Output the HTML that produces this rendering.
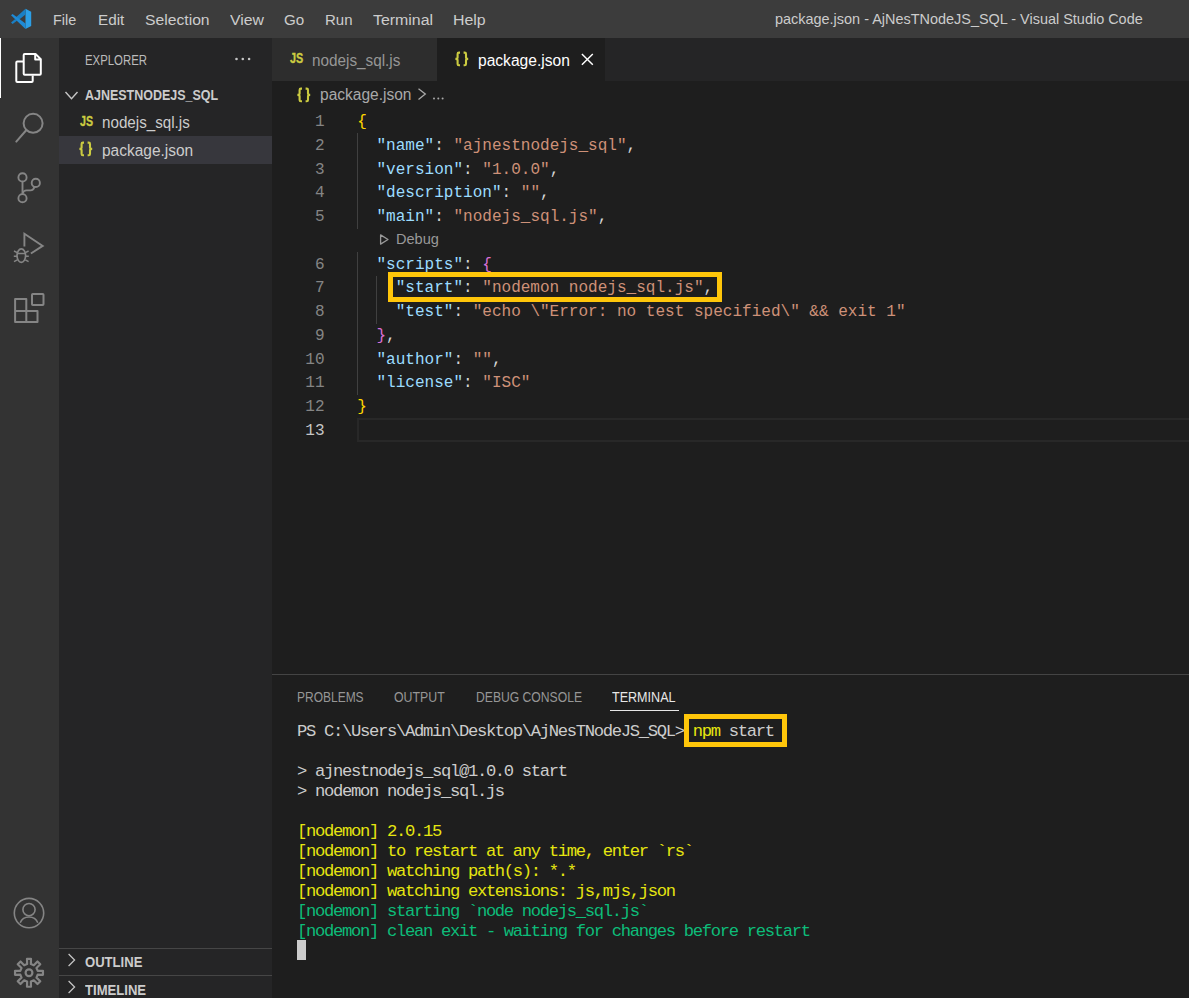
<!DOCTYPE html>
<html><head><meta charset="utf-8"><style>
html,body{margin:0;padding:0;}
body{width:1189px;height:998px;overflow:hidden;position:relative;background:#1e1e1e;font-family:'Liberation Sans', sans-serif;}
.t{position:absolute;white-space:pre;}
.r{position:absolute;}
</style></head><body>
<div class="r" style="left:0px;top:0px;width:1189px;height:38px;background:#3c3c3c;"></div>
<div class="r" style="left:0px;top:38px;width:59px;height:960px;background:#333333;"></div>
<div class="r" style="left:59px;top:38px;width:213px;height:960px;background:#252526;"></div>
<div class="r" style="left:272px;top:38px;width:917px;height:43px;background:#252526;"></div>
<div class="r" style="left:272px;top:81px;width:917px;height:917px;background:#1e1e1e;"></div>
<svg class="r" style="left:0;top:0" width="40" height="38" viewBox="0 0 40 38">
<polygon points="25.5,8.8 31.2,11.7 31.2,26.1 25.5,29" fill="#2c9fe6"/>
<polygon points="25.5,8.8 25.5,14.6 18.3,20.2 15.4,17.8" fill="#1a7fc4"/>
<polygon points="11,15.3 12.6,14 25.5,23.4 25.5,29" fill="#1e8ad6"/>
<polygon points="11,22.6 12.6,23.9 17.3,20.4 15.2,18.9" fill="#1a7fc4"/>
</svg>
<div class="t" style="left:53.10px;top:10.15px;font-size:15.5px;line-height:20.15px;color:#cccccc;font-family:'Liberation Sans', sans-serif;font-weight:normal;transform:scaleX(0.9291);transform-origin:0 0;">File</div>
<div class="t" style="left:97.50px;top:10.15px;font-size:15.5px;line-height:20.15px;color:#cccccc;font-family:'Liberation Sans', sans-serif;font-weight:normal;transform:scaleX(0.9848);transform-origin:0 0;">Edit</div>
<div class="t" style="left:144.60px;top:10.15px;font-size:15.5px;line-height:20.15px;color:#cccccc;font-family:'Liberation Sans', sans-serif;font-weight:normal;transform:scaleX(1.0131);transform-origin:0 0;">Selection</div>
<div class="t" style="left:229.70px;top:10.15px;font-size:15.5px;line-height:20.15px;color:#cccccc;font-family:'Liberation Sans', sans-serif;font-weight:normal;transform:scaleX(1.0193);transform-origin:0 0;">View</div>
<div class="t" style="left:283.70px;top:10.15px;font-size:15.5px;line-height:20.15px;color:#cccccc;font-family:'Liberation Sans', sans-serif;font-weight:normal;transform:scaleX(0.9769);transform-origin:0 0;">Go</div>
<div class="t" style="left:324.90px;top:10.15px;font-size:15.5px;line-height:20.15px;color:#cccccc;font-family:'Liberation Sans', sans-serif;font-weight:normal;transform:scaleX(0.9674);transform-origin:0 0;">Run</div>
<div class="t" style="left:373.00px;top:10.15px;font-size:15.5px;line-height:20.15px;color:#cccccc;font-family:'Liberation Sans', sans-serif;font-weight:normal;transform:scaleX(1.0260);transform-origin:0 0;">Terminal</div>
<div class="t" style="left:453.30px;top:10.15px;font-size:15.5px;line-height:20.15px;color:#cccccc;font-family:'Liberation Sans', sans-serif;font-weight:normal;transform:scaleX(1.0256);transform-origin:0 0;">Help</div>
<div class="t" style="left:775.30px;top:8.75px;font-size:15.0px;line-height:19.5px;color:#cccccc;font-family:'Liberation Sans', sans-serif;font-weight:normal;transform:scaleX(0.9629);transform-origin:0 0;">package.json - AjNesTNodeJS_SQL - Visual Studio Code</div>
<div class="r" style="left:0px;top:38px;width:1.4px;height:60px;background:#ffffff;"></div>
<svg class="r" style="left:0;top:38px" width="60" height="300" viewBox="0 38 60 300" fill="none" stroke-width="2">
<path d="M35.2 53.9 H24.7 Q23.7 53.9 23.7 54.9 V73.8 Q23.7 74.8 24.7 74.8 H39.8 Q40.8 74.8 40.8 73.8 V59.2 L35.5 53.9 Z M35.2 54.2 V59.6 H40.6" stroke="#ffffff" stroke-linejoin="round"/>
<path d="M23.2 61.4 H17.3 Q16.3 61.4 16.3 62.4 V81 Q16.3 82 17.3 82 H31.7 Q32.7 82 32.7 81 V75.5" stroke="#ffffff" stroke-linejoin="round"/>
<circle cx="33.1" cy="123.3" r="9.5" stroke="#858585"/>
<path d="M26.4 130 L16.3 141.6" stroke="#858585" stroke-linecap="round"/>
<circle cx="22.5" cy="177.4" r="4.1" stroke="#858585" stroke-width="1.9"/>
<circle cx="22.5" cy="198.2" r="4.1" stroke="#858585" stroke-width="1.9"/>
<circle cx="35.8" cy="182.9" r="4.1" stroke="#858585" stroke-width="1.9"/>
<path d="M22.5 181.5 V194.1" stroke="#858585" stroke-width="1.9"/>
<path d="M34.4 186.8 Q33.5 190.4 30.5 190.4 H26.5 Q23.5 190.4 22.6 193.5" stroke="#858585" stroke-width="1.9"/>
<path d="M24.4 246.5 V233.8 L42.7 245.9 L30.9 253.5" stroke="#858585" stroke-width="1.9" stroke-linejoin="miter"/>
<ellipse cx="21.3" cy="255.6" rx="4.3" ry="6.7" stroke="#858585" stroke-width="1.7"/>
<path d="M17.2 253.6 H25.4 M14 251 L17.3 252.6 M28.6 251 L25.3 252.6 M13.8 256.2 H17 M25.6 256.2 H28.8 M14 261.6 L17.3 259.8 M28.6 261.6 L25.3 259.8" stroke="#858585" stroke-width="1.5"/>
<path d="M15.1 299 H26.3 V322 H15.1 Z M15.1 311 H37.5 V322 H26.3" stroke="#858585" stroke-linejoin="round"/>
<rect x="32" y="294" width="11.5" height="11" rx="0.8" stroke="#858585"/>
</svg>
<svg class="r" style="left:0;top:880px" width="60" height="118" viewBox="0 880 60 118" fill="none">
<circle cx="29" cy="913.1" r="14.7" stroke="#858585" stroke-width="1.6"/>
<circle cx="29" cy="909.6" r="6.1" stroke="#858585" stroke-width="1.6"/>
<path d="M20.2 922.8 Q22.5 917 29 917 Q35.5 917 37.8 922.8" stroke="#858585" stroke-width="1.6"/>
<path d="M27.13 964.10 L27.01 958.84 L30.99 958.84 L30.87 964.10 L33.83 965.32 L37.47 961.52 L40.28 964.33 L36.48 967.97 L37.70 970.93 L42.96 970.81 L42.96 974.79 L37.70 974.67 L36.48 977.63 L40.28 981.27 L37.47 984.08 L33.83 980.28 L30.87 981.50 L30.99 986.76 L27.01 986.76 L27.13 981.50 L24.17 980.28 L20.53 984.08 L17.72 981.27 L21.52 977.63 L20.30 974.67 L15.04 974.79 L15.04 970.81 L20.30 970.93 L21.52 967.97 L17.72 964.33 L20.53 961.52 L24.17 965.32 Z" stroke-linejoin="round" stroke-width="2.2" stroke="#858585"/>
<circle cx="29" cy="972.8" r="3.4" stroke="#858585" stroke-width="2.2"/>
</svg>
<div class="t" style="left:84.60px;top:51.25px;font-size:14px;line-height:18.2px;color:#bbbbbb;font-family:'Liberation Sans', sans-serif;font-weight:normal;transform:scaleX(0.8132);transform-origin:0 0;">EXPLORER</div>
<svg class="r" style="left:230px;top:52px" width="26" height="14"><circle cx="6.5" cy="7" r="1.3" fill="#c5c5c5"/><circle cx="12.8" cy="7" r="1.3" fill="#c5c5c5"/><circle cx="19.1" cy="7" r="1.3" fill="#c5c5c5"/></svg>
<svg class="r" style="left:60px;top:82px" width="30" height="26" fill="none"><path d="M5.5 10 L11.5 16.8 L17.5 10" stroke="#c5c5c5" stroke-width="1.4"/></svg>
<div class="t" style="left:84.60px;top:85.85px;font-size:14.5px;line-height:18.85px;color:#cccccc;font-family:'Liberation Sans', sans-serif;font-weight:bold;transform:scaleX(0.8609);transform-origin:0 0;">AJNESTNODEJS_SQL</div>
<div class="r" style="left:59px;top:136px;width:213px;height:27.5px;background:#37373d;"></div>
<div class="t" style="left:79.80px;top:112.45px;font-size:14.6px;line-height:18.98px;color:#cbcb41;font-family:'Liberation Sans', sans-serif;font-weight:bold;-webkit-text-stroke:0.35px #cbcb41;transform:scaleX(0.7281);transform-origin:0 0;">JS</div>
<div class="t" style="left:102.20px;top:113.26px;font-size:16px;line-height:20.8px;color:#cccccc;font-family:'Liberation Sans', sans-serif;font-weight:normal;transform:scaleX(0.9492);transform-origin:0 0;">nodejs_sql.js</div>
<svg class="r" style="left:74.00px;top:137.70px" width="24" height="24" fill="none" stroke="#cbcb41" stroke-width="2.1"><path d="M10 4.6 H8.9 Q7.6 4.6 7.6 5.9 V9.5 Q7.6 10.9 5.4 10.9 Q7.6 10.9 7.6 12.3 V15.9 Q7.6 17.2 8.9 17.2 H10 M13.6 4.6 H14.7 Q16 4.6 16 5.9 V9.5 Q16 10.9 18.2 10.9 Q16 10.9 16 12.3 V15.9 Q16 17.2 14.7 17.2 H13.6"/></svg>
<div class="t" style="left:102.20px;top:140.66px;font-size:16px;line-height:20.8px;color:#cccccc;font-family:'Liberation Sans', sans-serif;font-weight:normal;transform:scaleX(0.9672);transform-origin:0 0;">package.json</div>
<div class="r" style="left:59px;top:948px;width:213px;height:1px;background:#464646;"></div>
<div class="r" style="left:59px;top:975px;width:213px;height:1px;background:#464646;"></div>
<svg class="r" style="left:60px;top:950px" width="30" height="46" fill="none"><path d="M8.6 4 L14.6 10 L8.6 16 M8.6 31 L14.6 37 L8.6 43" stroke="#c5c5c5" stroke-width="1.25"/></svg>
<div class="t" style="left:84.60px;top:953.25px;font-size:14px;line-height:18.2px;color:#cccccc;font-family:'Liberation Sans', sans-serif;font-weight:bold;transform:scaleX(0.9342);transform-origin:0 0;">OUTLINE</div>
<div class="t" style="left:84.60px;top:981.05px;font-size:14px;line-height:18.2px;color:#cccccc;font-family:'Liberation Sans', sans-serif;font-weight:bold;transform:scaleX(0.9351);transform-origin:0 0;">TIMELINE</div>
<div class="r" style="left:272px;top:38px;width:164.5px;height:43px;background:#2d2d2d;"></div>
<div class="r" style="left:436.5px;top:38px;width:168.5px;height:43px;background:#1e1e1e;"></div>
<div class="t" style="left:289.60px;top:49.45px;font-size:14.6px;line-height:18.98px;color:#cbcb41;font-family:'Liberation Sans', sans-serif;font-weight:bold;-webkit-text-stroke:0.35px #cbcb41;transform:scaleX(0.7393);transform-origin:0 0;">JS</div>
<div class="t" style="left:312.10px;top:50.66px;font-size:16px;line-height:20.8px;color:#969696;font-family:'Liberation Sans', sans-serif;font-weight:normal;transform:scaleX(0.9557);transform-origin:0 0;">nodejs_sql.js</div>
<svg class="r" style="left:450.00px;top:48.00px" width="24" height="24" fill="none" stroke="#cbcb41" stroke-width="2.1"><path d="M10 4.6 H8.9 Q7.6 4.6 7.6 5.9 V9.5 Q7.6 10.9 5.4 10.9 Q7.6 10.9 7.6 12.3 V15.9 Q7.6 17.2 8.9 17.2 H10 M13.6 4.6 H14.7 Q16 4.6 16 5.9 V9.5 Q16 10.9 18.2 10.9 Q16 10.9 16 12.3 V15.9 Q16 17.2 14.7 17.2 H13.6"/></svg>
<div class="t" style="left:477.70px;top:50.66px;font-size:16px;line-height:20.8px;color:#ffffff;font-family:'Liberation Sans', sans-serif;font-weight:normal;transform:scaleX(0.9736);transform-origin:0 0;">package.json</div>
<svg class="r" style="left:578px;top:50px" width="20" height="20" fill="none"><path d="M3.9 3.9 L14.8 14.8 M14.8 3.9 L3.9 14.8" stroke="#ffffff" stroke-width="1.45"/></svg>
<svg class="r" style="left:291.70px;top:83.70px" width="24" height="24" fill="none" stroke="#cbcb41" stroke-width="2.1"><path d="M10 4.6 H8.9 Q7.6 4.6 7.6 5.9 V9.5 Q7.6 10.9 5.4 10.9 Q7.6 10.9 7.6 12.3 V15.9 Q7.6 17.2 8.9 17.2 H10 M13.6 4.6 H14.7 Q16 4.6 16 5.9 V9.5 Q16 10.9 18.2 10.9 Q16 10.9 16 12.3 V15.9 Q16 17.2 14.7 17.2 H13.6"/></svg>
<div class="t" style="left:319.60px;top:85.16px;font-size:16px;line-height:20.8px;color:#a9a9a9;font-family:'Liberation Sans', sans-serif;font-weight:normal;transform:scaleX(0.9704);transform-origin:0 0;">package.json</div>
<svg class="r" style="left:414px;top:84px" width="34" height="20" fill="none"><path d="M4.5 4.7 L11.3 10.1 L4.5 15.5" stroke="#a9a9a9" stroke-width="1.3"/><circle cx="20" cy="14.6" r="1" fill="#a9a9a9"/><circle cx="24.3" cy="14.6" r="1" fill="#a9a9a9"/><circle cx="28.6" cy="14.6" r="1" fill="#a9a9a9"/></svg>
<div class="r" style="left:357px;top:418px;width:832px;height:24px;background:transparent;box-sizing:border-box;border:2px solid #282828;border-right:none;"></div>
<div class="r" style="left:357px;top:133px;width:1px;height:95.5px;background:#404040;"></div>
<div class="r" style="left:357px;top:252px;width:1px;height:142.5px;background:#404040;"></div>
<div class="r" style="left:376px;top:276px;width:1px;height:47.5px;background:#404040;"></div>
<div class="t" style="left:314.98px;top:112.10px;font-size:16.04px;line-height:20.85px;color:#858585;font-family:'Liberation Mono', monospace;font-weight:normal;">1</div>
<div class="t" style="left:357.20px;top:112.10px;font-size:16.04px;line-height:20.85px;color:#d4d4d4;font-family:'Liberation Mono', monospace;font-weight:normal;white-space:pre;"><span style="color:#ffd700">{</span></div>
<div class="t" style="left:314.98px;top:135.85px;font-size:16.04px;line-height:20.85px;color:#858585;font-family:'Liberation Mono', monospace;font-weight:normal;">2</div>
<div class="t" style="left:357.20px;top:135.85px;font-size:16.04px;line-height:20.85px;color:#d4d4d4;font-family:'Liberation Mono', monospace;font-weight:normal;white-space:pre;"><span style="color:#d4d4d4">  </span><span style="color:#9cdcfe">"name"</span><span style="color:#d4d4d4">: </span><span style="color:#ce9178">"ajnestnodejs_sql"</span><span style="color:#d4d4d4">,</span></div>
<div class="t" style="left:314.98px;top:159.60px;font-size:16.04px;line-height:20.85px;color:#858585;font-family:'Liberation Mono', monospace;font-weight:normal;">3</div>
<div class="t" style="left:357.20px;top:159.60px;font-size:16.04px;line-height:20.85px;color:#d4d4d4;font-family:'Liberation Mono', monospace;font-weight:normal;white-space:pre;"><span style="color:#d4d4d4">  </span><span style="color:#9cdcfe">"version"</span><span style="color:#d4d4d4">: </span><span style="color:#ce9178">"1.0.0"</span><span style="color:#d4d4d4">,</span></div>
<div class="t" style="left:314.98px;top:183.35px;font-size:16.04px;line-height:20.85px;color:#858585;font-family:'Liberation Mono', monospace;font-weight:normal;">4</div>
<div class="t" style="left:357.20px;top:183.35px;font-size:16.04px;line-height:20.85px;color:#d4d4d4;font-family:'Liberation Mono', monospace;font-weight:normal;white-space:pre;"><span style="color:#d4d4d4">  </span><span style="color:#9cdcfe">"description"</span><span style="color:#d4d4d4">: </span><span style="color:#ce9178">""</span><span style="color:#d4d4d4">,</span></div>
<div class="t" style="left:314.98px;top:207.10px;font-size:16.04px;line-height:20.85px;color:#858585;font-family:'Liberation Mono', monospace;font-weight:normal;">5</div>
<div class="t" style="left:357.20px;top:207.10px;font-size:16.04px;line-height:20.85px;color:#d4d4d4;font-family:'Liberation Mono', monospace;font-weight:normal;white-space:pre;"><span style="color:#d4d4d4">  </span><span style="color:#9cdcfe">"main"</span><span style="color:#d4d4d4">: </span><span style="color:#ce9178">"nodejs_sql.js"</span><span style="color:#d4d4d4">,</span></div>
<div class="t" style="left:314.98px;top:254.55px;font-size:16.04px;line-height:20.85px;color:#858585;font-family:'Liberation Mono', monospace;font-weight:normal;">6</div>
<div class="t" style="left:357.20px;top:254.55px;font-size:16.04px;line-height:20.85px;color:#d4d4d4;font-family:'Liberation Mono', monospace;font-weight:normal;white-space:pre;"><span style="color:#d4d4d4">  </span><span style="color:#9cdcfe">"scripts"</span><span style="color:#d4d4d4">: </span><span style="color:#da70d6">{</span></div>
<div class="t" style="left:314.98px;top:278.30px;font-size:16.04px;line-height:20.85px;color:#858585;font-family:'Liberation Mono', monospace;font-weight:normal;">7</div>
<div class="t" style="left:357.20px;top:278.30px;font-size:16.04px;line-height:20.85px;color:#d4d4d4;font-family:'Liberation Mono', monospace;font-weight:normal;white-space:pre;"><span style="color:#d4d4d4">    </span><span style="color:#9cdcfe">"start"</span><span style="color:#d4d4d4">: </span><span style="color:#ce9178">"nodemon nodejs_sql.js"</span><span style="color:#d4d4d4">,</span></div>
<div class="t" style="left:314.98px;top:302.05px;font-size:16.04px;line-height:20.85px;color:#858585;font-family:'Liberation Mono', monospace;font-weight:normal;">8</div>
<div class="t" style="left:357.20px;top:302.05px;font-size:16.04px;line-height:20.85px;color:#d4d4d4;font-family:'Liberation Mono', monospace;font-weight:normal;white-space:pre;"><span style="color:#d4d4d4">    </span><span style="color:#9cdcfe">"test"</span><span style="color:#d4d4d4">: </span><span style="color:#ce9178">"echo \"Error: no test specified\" &amp;&amp; exit 1"</span></div>
<div class="t" style="left:314.98px;top:325.80px;font-size:16.04px;line-height:20.85px;color:#858585;font-family:'Liberation Mono', monospace;font-weight:normal;">9</div>
<div class="t" style="left:357.20px;top:325.80px;font-size:16.04px;line-height:20.85px;color:#d4d4d4;font-family:'Liberation Mono', monospace;font-weight:normal;white-space:pre;"><span style="color:#d4d4d4">  </span><span style="color:#da70d6">}</span><span style="color:#d4d4d4">,</span></div>
<div class="t" style="left:305.35px;top:349.55px;font-size:16.04px;line-height:20.85px;color:#858585;font-family:'Liberation Mono', monospace;font-weight:normal;">10</div>
<div class="t" style="left:357.20px;top:349.55px;font-size:16.04px;line-height:20.85px;color:#d4d4d4;font-family:'Liberation Mono', monospace;font-weight:normal;white-space:pre;"><span style="color:#d4d4d4">  </span><span style="color:#9cdcfe">"author"</span><span style="color:#d4d4d4">: </span><span style="color:#ce9178">""</span><span style="color:#d4d4d4">,</span></div>
<div class="t" style="left:305.35px;top:373.30px;font-size:16.04px;line-height:20.85px;color:#858585;font-family:'Liberation Mono', monospace;font-weight:normal;">11</div>
<div class="t" style="left:357.20px;top:373.30px;font-size:16.04px;line-height:20.85px;color:#d4d4d4;font-family:'Liberation Mono', monospace;font-weight:normal;white-space:pre;"><span style="color:#d4d4d4">  </span><span style="color:#9cdcfe">"license"</span><span style="color:#d4d4d4">: </span><span style="color:#ce9178">"ISC"</span></div>
<div class="t" style="left:305.35px;top:397.05px;font-size:16.04px;line-height:20.85px;color:#858585;font-family:'Liberation Mono', monospace;font-weight:normal;">12</div>
<div class="t" style="left:357.20px;top:397.05px;font-size:16.04px;line-height:20.85px;color:#d4d4d4;font-family:'Liberation Mono', monospace;font-weight:normal;white-space:pre;"><span style="color:#ffd700">}</span></div>
<div class="t" style="left:305.35px;top:420.80px;font-size:16.04px;line-height:20.85px;color:#c6c6c6;font-family:'Liberation Mono', monospace;font-weight:normal;">13</div>
<svg class="r" style="left:376px;top:230px" width="16" height="18" fill="none"><path d="M4.6 4.9 L12 9.5 L4.6 14.1 Z" stroke="#999999" stroke-width="1.3" stroke-linejoin="round"/></svg>
<div class="t" style="left:395.80px;top:230.25px;font-size:14.6px;line-height:18.98px;color:#999999;font-family:'Liberation Sans', sans-serif;font-weight:normal;transform:scaleX(0.9971);transform-origin:0 0;">Debug</div>
<div class="r" style="left:388px;top:272px;width:334px;height:30px;background:transparent;box-sizing:border-box;border:5px solid #ffc60a;"></div>
<div class="r" style="left:272px;top:674px;width:917px;height:1px;background:#444444;"></div>
<div class="t" style="left:297.00px;top:688.05px;font-size:14px;line-height:18.2px;color:#969696;font-family:'Liberation Sans', sans-serif;font-weight:normal;transform:scaleX(0.8561);transform-origin:0 0;">PROBLEMS</div>
<div class="t" style="left:393.90px;top:688.05px;font-size:14px;line-height:18.2px;color:#969696;font-family:'Liberation Sans', sans-serif;font-weight:normal;transform:scaleX(0.8809);transform-origin:0 0;">OUTPUT</div>
<div class="t" style="left:475.80px;top:688.05px;font-size:14px;line-height:18.2px;color:#969696;font-family:'Liberation Sans', sans-serif;font-weight:normal;transform:scaleX(0.8679);transform-origin:0 0;">DEBUG CONSOLE</div>
<div class="t" style="left:612.20px;top:688.05px;font-size:14px;line-height:18.2px;color:#e7e7e7;font-family:'Liberation Sans', sans-serif;font-weight:normal;transform:scaleX(0.8971);transform-origin:0 0;">TERMINAL</div>
<div class="r" style="left:610px;top:709.5px;width:69px;height:1.25px;background:#e7e7e7;"></div>
<div class="t" style="left:297.00px;top:720.64px;font-size:17.2px;line-height:22.36px;color:#cccccc;font-family:'Liberation Mono', monospace;font-weight:normal;white-space:pre;letter-spacing:-1.320px;"><span style="color:#cccccc">PS C:\Users\Admin\Desktop\AjNesTNodeJS_SQL&gt; </span><span style="color:#e5e510">npm</span><span style="color:#cccccc"> start</span></div>
<div class="t" style="left:297.00px;top:760.64px;font-size:17.2px;line-height:22.36px;color:#cccccc;font-family:'Liberation Mono', monospace;font-weight:normal;white-space:pre;letter-spacing:-1.320px;"><span style="color:#cccccc">&gt; ajnestnodejs_sql@1.0.0 start</span></div>
<div class="t" style="left:297.00px;top:780.64px;font-size:17.2px;line-height:22.36px;color:#cccccc;font-family:'Liberation Mono', monospace;font-weight:normal;white-space:pre;letter-spacing:-1.320px;"><span style="color:#cccccc">&gt; nodemon nodejs_sql.js</span></div>
<div class="t" style="left:297.00px;top:820.64px;font-size:17.2px;line-height:22.36px;color:#cccccc;font-family:'Liberation Mono', monospace;font-weight:normal;white-space:pre;letter-spacing:-1.320px;"><span style="color:#e5e510">[nodemon] 2.0.15</span></div>
<div class="t" style="left:297.00px;top:840.64px;font-size:17.2px;line-height:22.36px;color:#cccccc;font-family:'Liberation Mono', monospace;font-weight:normal;white-space:pre;letter-spacing:-1.320px;"><span style="color:#e5e510">[nodemon] to restart at any time, enter `rs`</span></div>
<div class="t" style="left:297.00px;top:860.64px;font-size:17.2px;line-height:22.36px;color:#cccccc;font-family:'Liberation Mono', monospace;font-weight:normal;white-space:pre;letter-spacing:-1.320px;"><span style="color:#e5e510">[nodemon] watching path(s): *.*</span></div>
<div class="t" style="left:297.00px;top:880.64px;font-size:17.2px;line-height:22.36px;color:#cccccc;font-family:'Liberation Mono', monospace;font-weight:normal;white-space:pre;letter-spacing:-1.320px;"><span style="color:#e5e510">[nodemon] watching extensions: js,mjs,json</span></div>
<div class="t" style="left:297.00px;top:900.64px;font-size:17.2px;line-height:22.36px;color:#cccccc;font-family:'Liberation Mono', monospace;font-weight:normal;white-space:pre;letter-spacing:-1.320px;"><span style="color:#0dbc79">[nodemon] starting `node nodejs_sql.js`</span></div>
<div class="t" style="left:297.00px;top:920.64px;font-size:17.2px;line-height:22.36px;color:#cccccc;font-family:'Liberation Mono', monospace;font-weight:normal;white-space:pre;letter-spacing:-1.320px;"><span style="color:#0dbc79">[nodemon] clean exit - waiting for changes before restart</span></div>
<div class="r" style="left:297px;top:940px;width:9px;height:20px;background:#cccccc;"></div>
<div class="r" style="left:684px;top:714px;width:103px;height:33px;background:transparent;box-sizing:border-box;border:5px solid #ffc60a;"></div>
</body></html>
